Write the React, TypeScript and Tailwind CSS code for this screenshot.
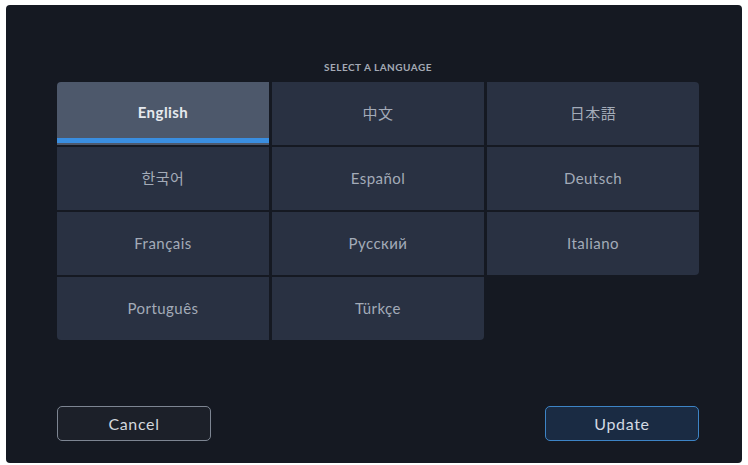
import * as React from "react";

interface Language {
  label: string;
  corner: string;
}

const LANGUAGES: Language[] = [
  { label: "English", corner: "rounded-tl-[4px]" },
  { label: "中文", corner: "" },
  { label: "日本語", corner: "rounded-tr-[4px]" },
  { label: "한국어", corner: "" },
  { label: "Español", corner: "" },
  { label: "Deutsch", corner: "" },
  { label: "Français", corner: "" },
  { label: "Русский", corner: "" },
  { label: "Italiano", corner: "rounded-br-[4px]" },
  { label: "Português", corner: "rounded-bl-[4px]" },
  { label: "Türkçe", corner: "rounded-br-[4px]" },
];

export default function App(): React.ReactElement {
  const [selected, setSelected] = React.useState("English");

  return (
    <div
      className="w-[748px] h-[465px] bg-white pt-[5px] pl-[6px] pr-[6px] pb-[2px]"
      style={{ fontFamily: "Lato, 'Noto Sans', 'Noto Sans CJK JP', 'Noto Sans CJK KR', sans-serif" }}
    >
      <div className="flex h-full flex-col rounded-[4px] bg-[#151922] pl-[51px] pr-[43px] pt-[56px] pb-[22px]">
        <p className="text-center text-[10px] font-bold leading-[12px] tracking-[0.05em] text-[#a4aab5]">
          SELECT A LANGUAGE
        </p>
        <div className="mt-[9px] grid grid-cols-3 gap-x-[3px] gap-y-[2px]">
          {LANGUAGES.map((lang) => {
            const active = lang.label === selected;
            return (
              <button
                key={lang.label}
                onClick={() => setSelected(lang.label)}
                className={`relative flex h-[63px] items-center justify-center text-[15px] tracking-[0.03em] ${lang.corner} ${
                  active
                    ? "bg-[#4d586b] font-bold text-[#e6e9ee]"
                    : "bg-[#293142] text-[#a3abb8]"
                }`}
              >
                <span className={active ? "-mt-[2px]" : ""}>{lang.label}</span>
                {active && (
                  <span className="absolute bottom-[2px] left-0 right-0 h-[5px] bg-[#3a8ee0]" />
                )}
              </button>
            );
          })}
        </div>
        <div className="mt-auto flex justify-between">
          <button className="h-[35px] w-[154px] rounded-[5px] border-[1.5px] border-[#7d8592] bg-[#1c2029] text-[16px] tracking-[0.04em] text-[#d3d7dd]">
            Cancel
          </button>
          <button className="h-[35px] w-[154px] rounded-[5px] border-[1.5px] border-[#3d84c6] bg-[#1a2b43] text-[16px] tracking-[0.04em] text-[#d3d9e2]">
            Update
          </button>
        </div>
      </div>
    </div>
  );
}
